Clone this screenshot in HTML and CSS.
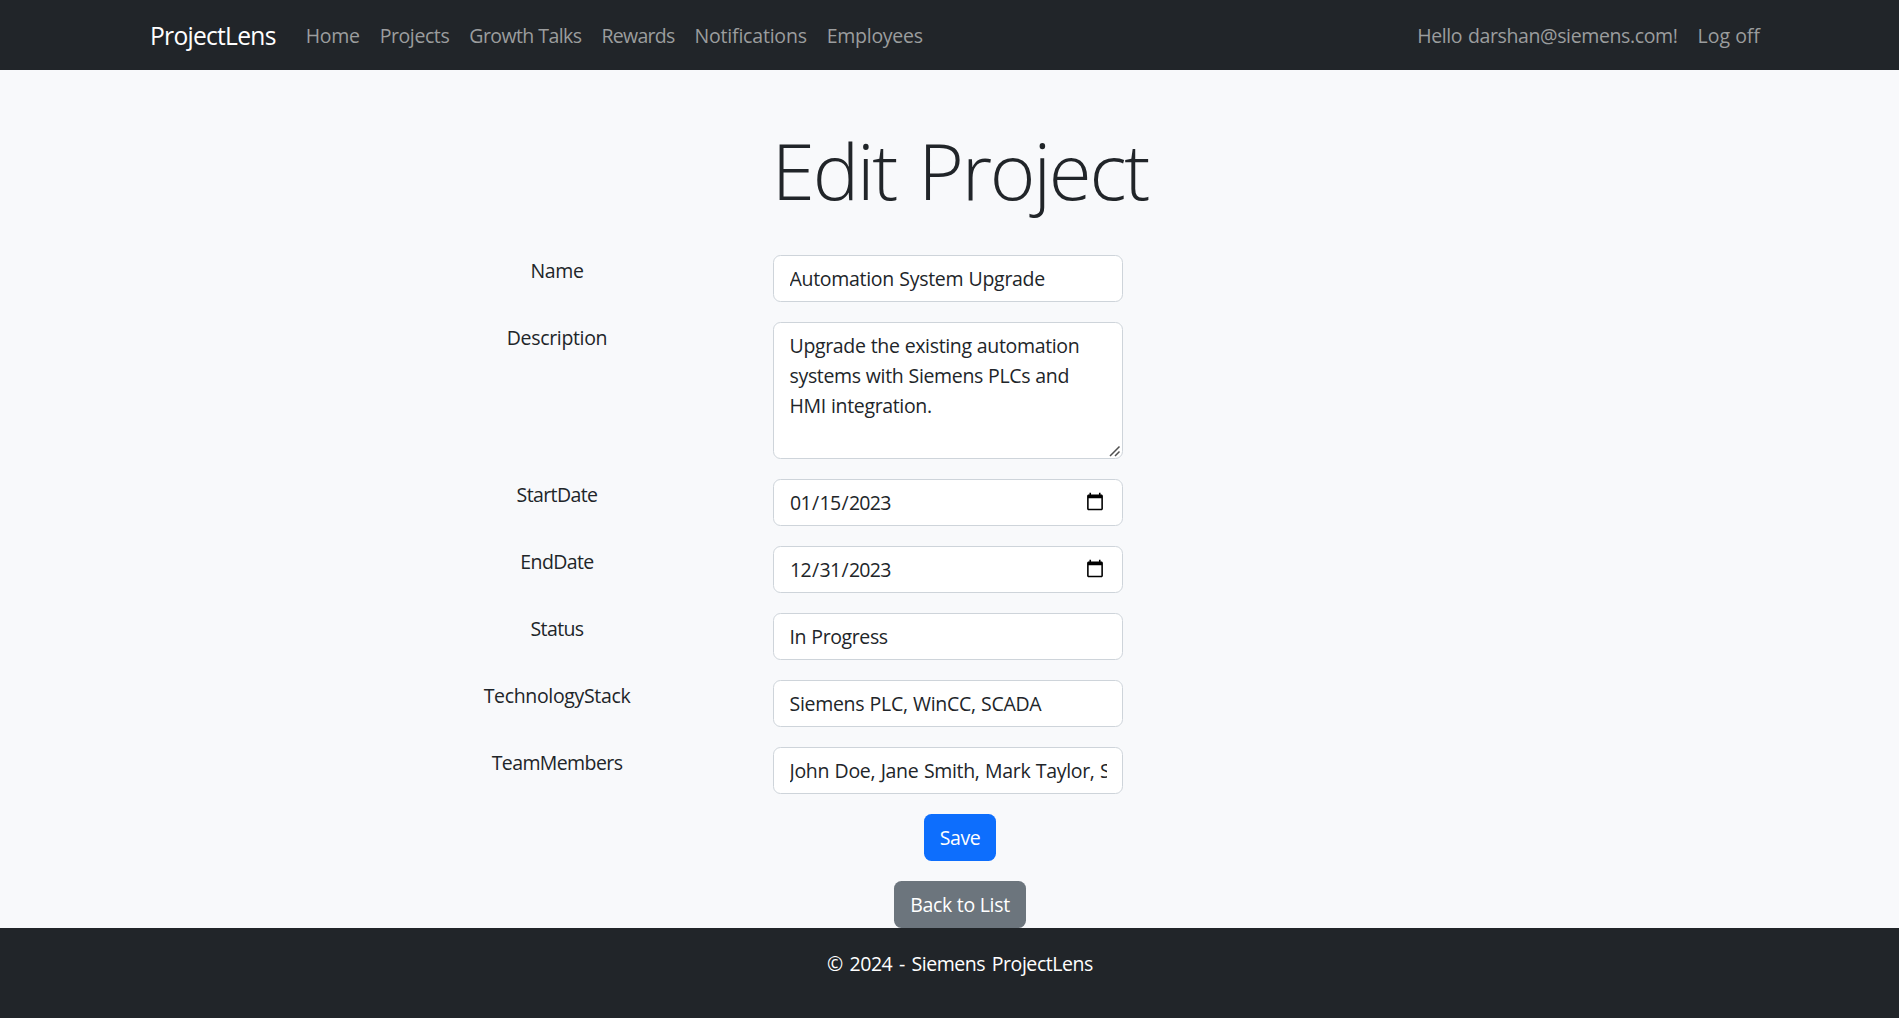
FILE: index.html
```html
<!DOCTYPE html>
<html lang="en">
<head>
<meta charset="utf-8">
<title>Edit Project - ProjectLens</title>
<link rel="stylesheet" href="styles.css">
</head>
<body>
<div class="page">
  <header class="navbar">
    <a class="brand">ProjectLens</a>
    <nav class="nav-main">
      <a class="nav-link">Home</a>
      <a class="nav-link nav-projects">Projects</a>
      <a class="nav-link nav-talks">Growth Talks</a>
      <a class="nav-link nav-rewards">Rewards</a>
      <a class="nav-link nav-notes">Notifications</a>
      <a class="nav-link">Employees</a>
    </nav>
    <nav class="nav-user">
      <a class="nav-link nav-hello">Hello darshan@siemens.com!</a>
      <a class="nav-link nav-logoff">Log off</a>
    </nav>
  </header>
  <main class="content">
    <h1 class="title">Edit Project</h1>
    <form class="form">
      <div class="row"><label class="label" for="name">Name</label><input class="control" id="name" value="Automation System Upgrade"></div>
      <div class="row"><label class="label" for="desc">Description</label><textarea class="control area" id="desc">Upgrade the existing automation systems with Siemens PLCs and HMI integration.</textarea></div>
      <div class="row"><label class="label tight" for="start">StartDate</label><input class="control date" type="date" id="start" value="2023-01-15"></div>
      <div class="row"><label class="label tight" for="end">EndDate</label><input class="control date" type="date" id="end" value="2023-12-31"></div>
      <div class="row"><label class="label tight" for="status">Status</label><input class="control status" id="status" value="In Progress"></div>
      <div class="row"><label class="label" for="stack">TechnologyStack</label><input class="control" id="stack" value="Siemens PLC, WinCC, SCADA"></div>
      <div class="row"><label class="label tight" for="team">TeamMembers</label><input class="control team" id="team" value="John Doe, Jane Smith, Mark Taylor, Sarah Lee"></div>
      <div class="actions"><button class="btn btn-primary" type="button">Save</button></div>
    </form>
    <div class="actions"><a class="btn btn-secondary">Back to List</a></div>
  </main>
  <footer class="footer">© 2024 - Siemens ProjectLens</footer>
</div>
</body>
</html>
```
FILE: styles.css
```css
* { box-sizing: border-box; }
html { overflow: hidden; }
body {
  margin: 0;
  background: #f8f9fb;
  color: #212529;
  font: 19.5px/30px "Open Sans", "Noto Sans", sans-serif;
}
.page { width: 1920px; min-height: 1018px; display: flex; flex-direction: column; }
.navbar {
  height: 70px;
  padding: 2px 150px 0;
  background: #212529;
  display: flex;
  align-items: center;
}
.brand { color: #fff; font-size: 24.6px; letter-spacing: -0.73px; margin-right: 20px; }
.nav-main, .nav-user { display: flex; }
.nav-user { margin-left: auto; }
.nav-link { color: #9b9d9e; padding: 10px; white-space: nowrap; letter-spacing: -0.27px; }
.nav-projects { letter-spacing: -0.41px; }
.nav-talks { letter-spacing: -0.57px; }
.nav-rewards { letter-spacing: -0.72px; }
.nav-notes { letter-spacing: -0.2px; }
.nav-hello { letter-spacing: -0.37px; word-spacing: 1px; }
.nav-logoff { letter-spacing: 0; }
.content { padding-top: 52px; }
.title {
  margin: 0;
  padding-bottom: 37px;
  font-size: 78px;
  line-height: 96px;
  font-weight: 300;
  letter-spacing: -2.2px;
  word-spacing: 4px;
  text-align: center;
}
.form { display: flex; flex-direction: column; }
.row { display: grid; grid-template-columns: 402px 350px; column-gap: 15px; margin: 0 0 20px 356px; }
.label { padding-top: 1px; text-align: center; letter-spacing: -0.34px; }
.tight { letter-spacing: -0.6px; }
.control {
  width: 350px;
  height: 47px;
  padding: 7.5px 15px 7.5px 15.5px;
  border: 1px solid #ced4da;
  border-radius: 7.5px;
  background: #fff;
  color: #212529;
  font: inherit;
  letter-spacing: -0.3px;
  word-spacing: 0.6px;
}
.area { height: 137px; display: block; letter-spacing: -0.34px; word-spacing: 0.4px; }
.area::-webkit-resizer {
  background: url("data:image/svg+xml,%3Csvg xmlns='http://www.w3.org/2000/svg' width='15' height='15'%3E%3Cpath d='M3 13L12.5 3.5M8 13L12.5 8.5' stroke='%23505050' stroke-width='1.5'/%3E%3C/svg%3E") no-repeat right bottom;
}
.date { padding-left: 15px; letter-spacing: -0.68px; }
.date::-webkit-calendar-picker-indicator { width: 20px; height: 20px; margin-bottom: 2px; }
.status { letter-spacing: -0.4px; }
.team { letter-spacing: -0.33px; word-spacing: 0.8px; }
.actions { display: flex; justify-content: center; }
.form .actions { margin-bottom: 20px; }
.btn {
  height: 47px;
  padding: 8.5px 0;
  border: 0;
  border-radius: 7.5px;
  color: #fff;
  font: inherit;
  text-align: center;
}
.btn-primary { width: 72px; background: #0d6efd; letter-spacing: -0.4px; }
.btn-secondary { width: 132px; background: #6c757d; letter-spacing: -0.3px; }
.footer { flex: 1; padding-top: 21px; background: #212529; color: #fff; text-align: center; letter-spacing: -0.44px; word-spacing: 2px; }
```
